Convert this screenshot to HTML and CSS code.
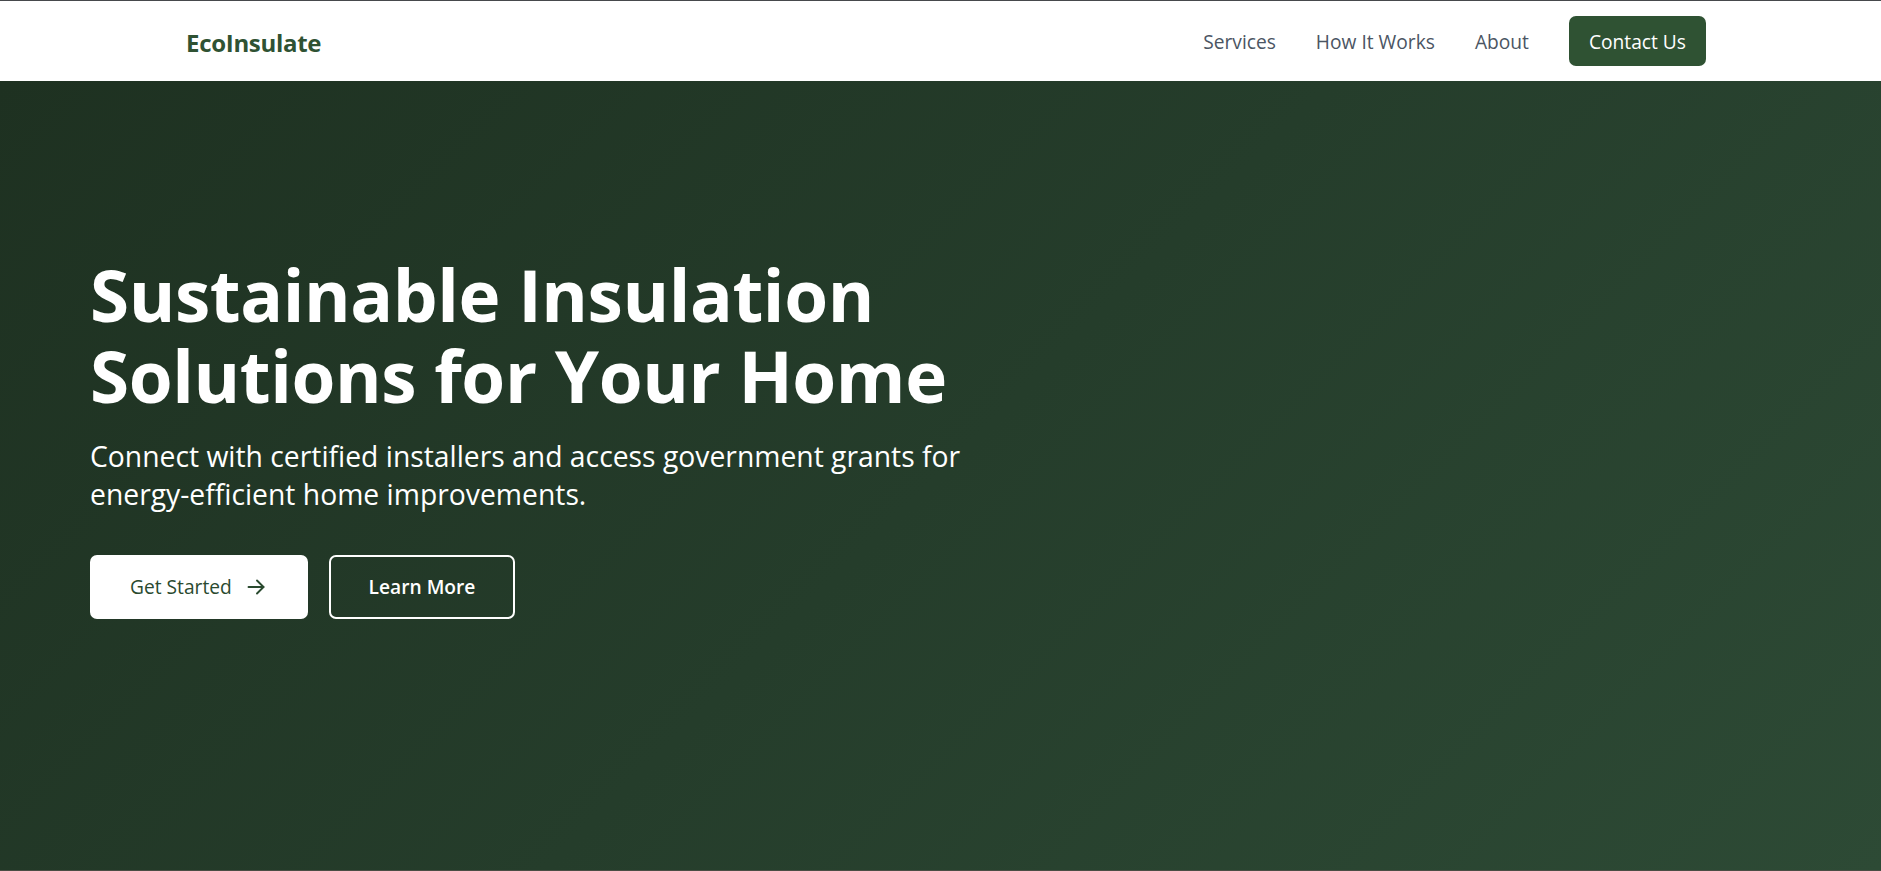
FILE: index.html
```html
<!DOCTYPE html>
<html lang="en">
<head>
<meta charset="utf-8">
<title>EcoInsulate</title>
<link rel="stylesheet" href="styles.css">
</head>
<body>
<header class="nav">
  <div class="logo">EcoInsulate</div>
  <nav class="nav-links">
    <a class="nav-link" href="#">Services</a>
    <a class="nav-link" href="#">How It Works</a>
    <a class="nav-link" href="#">About</a>
    <a class="btn-contact" href="#">Contact Us</a>
  </nav>
</header>
<main class="hero">
  <div class="hero-content">
    <h1 class="hero-title">Sustainable Insulation<br>Solutions for Your Home</h1>
    <p class="hero-text">Connect with certified installers and access government grants for energy-efficient home improvements.</p>
    <div class="hero-actions">
      <a class="btn btn-primary" href="#">Get Started
        <svg class="arrow" width="18" height="16" viewBox="0 0 18 16" fill="none" stroke="currentColor" stroke-width="1.9" stroke-linecap="round" stroke-linejoin="round"><path d="M1.5 8h15"/><path d="M10 1.5L16.5 8 10 14.5"/></svg>
      </a>
      <a class="btn btn-outline" href="#">Learn More</a>
    </div>
  </div>
</main>
</body>
</html>
```

FILE: styles.css
```css
* { box-sizing: border-box; }
html, body { margin: 0; padding: 0; }
body {
  font-family: "Open Sans", "Noto Sans", sans-serif;
  background: #ffffff;
  height: 871px;
  overflow: hidden;
  display: flex;
  flex-direction: column;
}
a { text-decoration: none; }

.nav {
  height: 81px;
  flex: none;
  border-top: 1px solid #46494c;
  background: #ffffff;
  display: flex;
  align-items: center;
  justify-content: space-between;
  padding: 0 175px 0 186px;
}
.logo {
  font-weight: 700;
  font-size: 24px;
  color: #2f5233;
  letter-spacing: -0.3px;
  padding-top: 2px;
}
.nav-links {
  display: flex;
  align-items: center;
  gap: 40px;
}
.nav-link {
  color: #4b5563;
  font-size: 19.2px;
}
.btn-contact {
  background: #2f5233;
  color: #ffffff;
  font-size: 19.2px;
  height: 50px;
  padding: 0 20px;
  border-radius: 7px;
  display: flex;
  align-items: center;
}

.hero {
  flex: 1;
  background: linear-gradient(135deg, #1e3121 0%, #253d2b 50%, #2d4a35 100%);
  border-bottom: 1px solid #4a4d44;
  padding: 173px 0 0 90px;
}
.hero-content {
  max-width: 980px;
}
.hero-title {
  margin: 0;
  color: #ffffff;
  font-size: 71px;
  line-height: 81px;
  font-weight: 700;
  letter-spacing: -0.4px;
}
.hero-text {
  margin: 21px 0 0;
  color: #ffffff;
  font-size: 28.3px;
  line-height: 38.4px;
  max-width: 920px;
}
.hero-actions {
  display: flex;
  gap: 21px;
  margin-top: 41px;
}
.btn {
  height: 64px;
  border-radius: 7px;
  display: flex;
  align-items: center;
  font-size: 19.2px;
}
.btn-primary {
  background: #ffffff;
  color: #2a4a2f;
  font-weight: 500;
  width: 218px;
  padding-left: 40px;
  gap: 15px;
}
.arrow { flex: none; }
.btn-outline {
  border: 2px solid #ffffff;
  color: #ffffff;
  font-weight: 600;
  width: 186px;
  justify-content: center;
}
```
